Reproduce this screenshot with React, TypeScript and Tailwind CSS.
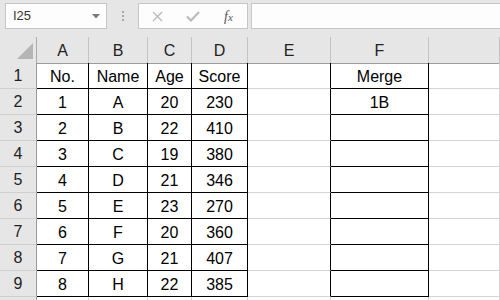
import { Fragment } from "react";

const cols = ["A", "B", "C", "D", "E", "F", ""];

const rows = [
  ["No.", "Name", "Age", "Score", "", "Merge", ""],
  ["1", "A", "20", "230", "", "1B", ""],
  ["2", "B", "22", "410", "", "", ""],
  ["3", "C", "19", "380", "", "", ""],
  ["4", "D", "21", "346", "", "", ""],
  ["5", "E", "23", "270", "", "", ""],
  ["6", "F", "20", "360", "", "", ""],
  ["7", "G", "21", "407", "", "", ""],
  ["8", "H", "22", "385", "", "", ""],
  ["", "", "", "", "", "", ""],
];

// border classes per column inside the bordered ranges (A:D and F)
const boxed = [
  "border-r-black border-b-black",
  "border-r-black border-b-black",
  "border-r-black border-b-black",
  "border-r-black border-b-black",
  "border-r-black border-b-[#d4d4d4]",
  "border-r-black border-b-black",
  "border-r-[#d4d4d4] border-b-[#d4d4d4]",
];

export default function App() {
  return (
    <div
      className="w-[500px] h-[300px] overflow-hidden bg-white text-black"
      style={{ fontFamily: '"Liberation Sans", Arial, sans-serif' }}
    >
      {/* ── FORMULA BAR ── */}
      <div className="h-[37px] bg-[#e6e6e6] flex items-start pt-[3px] pl-[5px]">
        <div className="w-[102px] h-[26px] bg-[#fdfdfd] border border-[#c6c6c6] flex items-center pl-[7px] pr-[6px]">
          <span className="text-[13px] text-[#333] flex-1">I25</span>
          <svg width="8" height="5" viewBox="0 0 8 5">
            <path d="M0 0h8L4 4.5z" fill="#7a7a7a" />
          </svg>
        </div>
        <div className="w-[31px] h-[26px] flex flex-col items-center justify-center gap-[2px]">
          <span className="w-[2px] h-[2px] bg-[#a6a6a6]" />
          <span className="w-[2px] h-[2px] bg-[#a6a6a6]" />
          <span className="w-[2px] h-[2px] bg-[#a6a6a6]" />
        </div>
        <div className="w-[110px] h-[26px] bg-[#fdfdfd] border border-[#c6c6c6] flex items-center pl-[13px]">
          <svg width="11" height="11" viewBox="0 0 11 11">
            <path d="M1 1l9 9M10 1l-9 9" stroke="#b9b9b9" strokeWidth="1.3" fill="none" />
          </svg>
          <svg width="14" height="11" viewBox="0 0 14 11" className="ml-[23px]">
            <path d="M1 5.5l4 4 8-8.5" stroke="#b9b9b9" strokeWidth="2" fill="none" />
          </svg>
          <span
            className="ml-[24px] text-[14px] italic text-[#555]"
            style={{ fontFamily: '"Liberation Serif", serif' }}
          >
            f<span className="text-[11px]">x</span>
          </span>
        </div>
        <div className="ml-[3px] flex-1 h-[26px] bg-[#fdfdfd] border border-[#c6c6c6] border-r-0" />
      </div>

      {/* ── SHEET ── */}
      <div className="grid grid-cols-[37px_52px_59px_44px_56px_83px_98px_1fr] auto-rows-[26px] text-[16px]">
        {/* header row */}
        <div className="h-[27px] bg-[#e6e6e6] border-r border-b border-r-[#ababab] border-b-[#9b9b9b] flex items-end justify-end pr-[3px] pb-[4px]">
          <svg width="16" height="16" viewBox="0 0 16 16">
            <path d="M16 0V16H0z" fill="#b5b5b5" />
          </svg>
        </div>
        {cols.map((c, i) => (
          <div
            key={"h" + i}
            className="h-[27px] bg-[#e6e6e6] border-r border-b border-r-[#c3c3c3] border-b-[#9b9b9b] flex items-center justify-center pt-[1px] text-[#222]"
          >
            {c}
          </div>
        ))}

        {rows.map((r, ri) => (
          <Fragment key={"r" + ri}>
            <div className="bg-[#e6e6e6] border-r border-b border-r-[#9b9b9b] border-b-[#cfcfcf] flex items-center justify-center pt-[1px] text-[#222]">
              {ri < 9 ? ri + 1 : ""}
            </div>
            {r.map((v, ci) => (
              <div
                key={ci}
                className={
                  "border-r border-b flex items-center justify-center pt-[2px] " +
                  (ri < 9 ? boxed[ci] : "border-r-[#d4d4d4] border-b-[#d4d4d4]")
                }
              >
                {v}
              </div>
            ))}
          </Fragment>
        ))}
      </div>
    </div>
  );
}
